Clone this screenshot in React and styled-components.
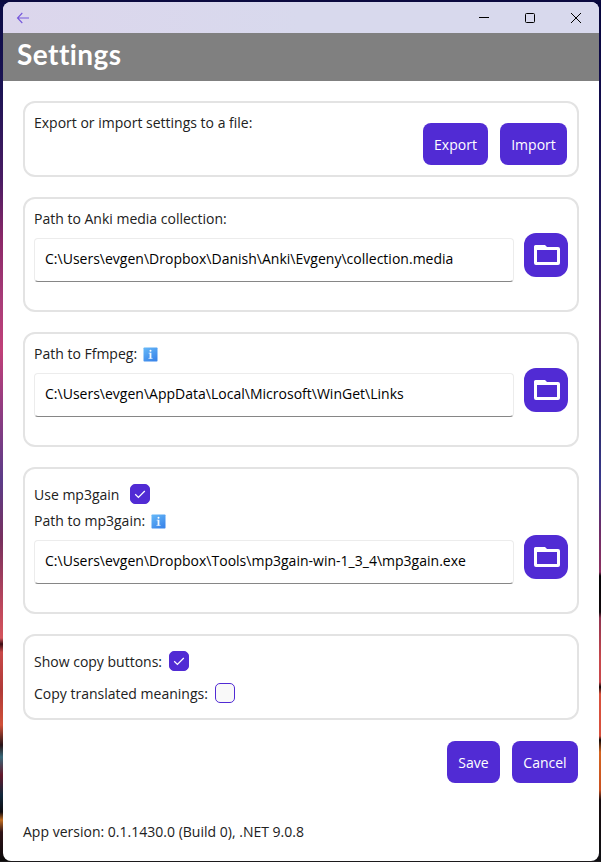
import React from "react";
import styled, { createGlobalStyle } from "styled-components";

const GlobalStyle = createGlobalStyle`
  * { box-sizing: border-box; }
  body { margin: 0; overflow: hidden; font-family: "Open Sans", sans-serif; }
`;

const Desktop = styled.div`
  width: 601px;
  height: 862px;
  padding: 2px 2px 1px 3px;
  background:
    linear-gradient(#0b0a40, #0b0a40) 0 0 / 100% 2px no-repeat,
    linear-gradient(#1c1a1c, #1c1a1c) 0 100% / 100% 1px no-repeat,
    linear-gradient(180deg, #0a0a45 0, #1c1454 90px, #4a1c63 180px, #8c2868 240px, #a83c78 300px, #c04078 350px,
      #983c80 400px, #5c3c88 480px, #78305e 540px, #c0485c 610px, #d4545c 638px, #3c0c14 644px, #c84848 652px,
      #b03a38 690px, #d05038 725px, #281418 745px, #386878 757px, #64182c 775px, #10283c 795px, #100c10 812px,
      #c06c20 820px, #301418 832px, #080808 862px) 0 0 / 50% 100% no-repeat,
    linear-gradient(180deg, #06063c 0, #150e50 120px, #251c60 240px, #4c225c 330px, #2a2860 400px, #38388c 480px,
      #6c2c68 530px, #8c3060 572px, #080408 576px, #10080c 612px, #903450 618px, #c8484c 660px, #c8484c 682px,
      #180808 687px, #d8503c 694px, #d8503c 736px, #100808 740px, #d46420 752px, #c85020 790px, #180c10 800px,
      #101014 862px) 100% 0 / 50% 100% no-repeat;
`;

const Window = styled.main`
  display: flex;
  flex-direction: column;
  height: 859px;
  overflow: hidden;
  border-radius: 8px;
  background: #fff;
  color: #212121;
  font-size: 14px;
  line-height: 20px;
`;

const TitleBar = styled.div`
  flex: none;
  display: flex;
  align-items: center;
  justify-content: space-between;
  height: 31px;
  padding: 0 17px 0 13px;
  background: linear-gradient(90deg, #dcd6ec, #d8d9ed 50%);
`;

const WindowControls = styled.div`
  display: flex;
  gap: 34px;
`;

const Glyph = styled.svg`
  display: block;
  flex: none;
  fill: none;
`;

const Header = styled.header`
  flex: none;
  height: 48px;
  padding: 3px 14px;
  background: #808080;
`;

const Title = styled.h1`
  margin: 0;
  color: #fff;
  font: 700 28px/36px Lato, sans-serif;
  font-variant-ligatures: none;
  letter-spacing: 0.45px;
`;

const Content = styled.div`
  display: flex;
  flex-direction: column;
  gap: 20px;
  padding: 20px;
`;

const Card = styled.section`
  height: ${(p) => p.$height}px;
  padding: ${(p) => p.$top || 10}px 9px 0;
  border: 2px solid #e3e3e3;
  border-radius: 12px;
`;

const SplitRow = styled.div`
  display: flex;
  justify-content: space-between;
`;

const Buttons = styled.div`
  display: flex;
  justify-content: flex-end;
  gap: 12px;
  margin-top: ${(p) => p.$offset || 0}px;
  margin-right: ${(p) => p.$inset || 0}px;
`;

const Button = styled.button`
  width: ${(p) => p.$width}px;
  height: 42px;
  padding: 2px 0 0;
  border: 0;
  border-radius: 8px;
  background: #512bd4;
  color: #fff;
  font: 14px/20px "Open Sans", sans-serif;
`;

const Label = styled.div`
  display: flex;
  align-items: center;
  height: 20px;
  gap: ${(p) => p.$gap || 6}px;
  margin-bottom: ${(p) => p.$after || 0}px;
`;

const PathRow = styled.div`
  display: flex;
  gap: 10px;
  margin-top: 9px;
`;

const PathInput = styled.input`
  width: 480px;
  height: 44px;
  padding: 0 10px 4px;
  border: 1px solid #ececec;
  border-bottom-color: #868686;
  border-radius: 4px;
  background: #fff;
  color: #000;
  font: 14px/20px "Open Sans", sans-serif;
  letter-spacing: 0.01px;
  outline: 0;
`;

const FolderButton = styled.button`
  display: grid;
  place-items: center;
  width: 44px;
  height: 44px;
  margin-top: -5px;
  padding: 0 0 0 2px;
  border: 0;
  border-radius: 12px;
  background: #512bd4;
`;

const CheckBox = styled.span`
  display: grid;
  place-items: center;
  width: 20px;
  height: 20px;
  margin-bottom: 2px;
  border: 1px solid #512bd4;
  border-radius: 5px;
  background: ${(p) => (p.$checked ? "#512bd4" : "#f9f9f9")};
`;

const Version = styled.footer`
  margin-top: 19px;
  letter-spacing: 0.01px;
`;

function InfoIcon() {
  return (
    <Glyph width="15" height="15" viewBox="0 0 15 15">
      <defs>
        <linearGradient id="info" x2="0.6" y2="1">
          <stop stopColor="#66b9f8" />
          <stop offset="1" stopColor="#3c87ea" />
        </linearGradient>
      </defs>
      <rect x="0.5" y="0.5" width="14" height="14" rx="0.7" fill="url(#info)" />
      <path d="M5.6 6.2h2M5.4 11.4h4.2" stroke="#cfe5fd" strokeWidth="0.8" />
      <path d="M7.5 5.8v5.8" stroke="#f4f9ff" strokeWidth="1.8" />
      <circle cx="7.5" cy="3.7" r="1" fill="#fff" />
    </Glyph>
  );
}

function Check({ checked }) {
  return (
    <CheckBox $checked={checked} role="checkbox" aria-checked={checked}>
      {checked && (
        <Glyph width="12" height="12" viewBox="0 0 12 12">
          <path d="M1.2 6.2l3.2 3.2 6.4-6.4" stroke="#fff" strokeWidth="1.25" />
        </Glyph>
      )}
    </CheckBox>
  );
}

function PathField({ value }) {
  return (
    <PathRow>
      <PathInput value={value} readOnly />
      <FolderButton aria-label="Browse">
        <Glyph width="26" height="20" viewBox="0 0 26 20">
          <path
            fill="#fff"
            fillRule="evenodd"
            d="M1.5 0H11l2 2h11q2 0 2 2v14q0 2-2 2H2q-2 0-2-2V1.5Q0 0 1.5 0zM3 5v12h20V5z"
          />
        </Glyph>
      </FolderButton>
    </PathRow>
  );
}

export default function App() {
  return (
    <Desktop>
      <GlobalStyle />
      <Window>
        <TitleBar>
          <Glyph width="14" height="12" viewBox="0 0 14 12">
            <path d="M6.3 1L1.5 6l4.8 5M1.5 6H13" stroke="#7658dc" strokeWidth="1.1" />
          </Glyph>
          <WindowControls>
            <Glyph width="12" height="12" viewBox="0 0 12 12">
              <path d="M1 5.5h10" stroke="#000" />
            </Glyph>
            <Glyph width="12" height="12" viewBox="0 0 12 12">
              <rect x="1.5" y="1.5" width="9" height="9" rx="1" stroke="#000" />
            </Glyph>
            <Glyph width="12" height="12" viewBox="0 0 12 12">
              <path d="M1 1l10 10M11 1L1 11" stroke="#000" />
            </Glyph>
          </WindowControls>
        </TitleBar>
        <Header>
          <Title>Settings</Title>
        </Header>
        <Content>
          <Card $height={76}>
            <SplitRow>
              <Label>Export or import settings to a file:</Label>
              <Buttons $offset={10} $inset={1}>
                <Button $width={65}>Export</Button>
                <Button $width={67}>Import</Button>
              </Buttons>
            </SplitRow>
          </Card>
          <Card $height={115}>
            <Label>Path to Anki media collection:</Label>
            <PathField value="C:\Users\evgen\Dropbox\Danish\Anki\Evgeny\collection.media" />
          </Card>
          <Card $height={115}>
            <Label>Path to Ffmpeg: <InfoIcon /></Label>
            <PathField value="C:\Users\evgen\AppData\Local\Microsoft\WinGet\Links" />
          </Card>
          <Card $height={147} $top={16}>
            <Label $gap={11} $after={6}>Use mp3gain <Check checked /></Label>
            <Label>Path to mp3gain: <InfoIcon /></Label>
            <PathField value="C:\Users\evgen\Dropbox\Tools\mp3gain-win-1_3_4\mp3gain.exe" />
          </Card>
          <Card $height={86} $top={16}>
            <Label $gap={7} $after={12}>Show copy buttons: <Check checked /></Label>
            <Label $gap={7}>Copy translated meanings: <Check checked={false} /></Label>
          </Card>
          <Buttons $offset={1} $inset={1}>
            <Button $width={53}>Save</Button>
            <Button $width={66}>Cancel</Button>
          </Buttons>
          <Version>App version: 0.1.1430.0 (Build 0), .NET 9.0.8</Version>
        </Content>
      </Window>
    </Desktop>
  );
}
